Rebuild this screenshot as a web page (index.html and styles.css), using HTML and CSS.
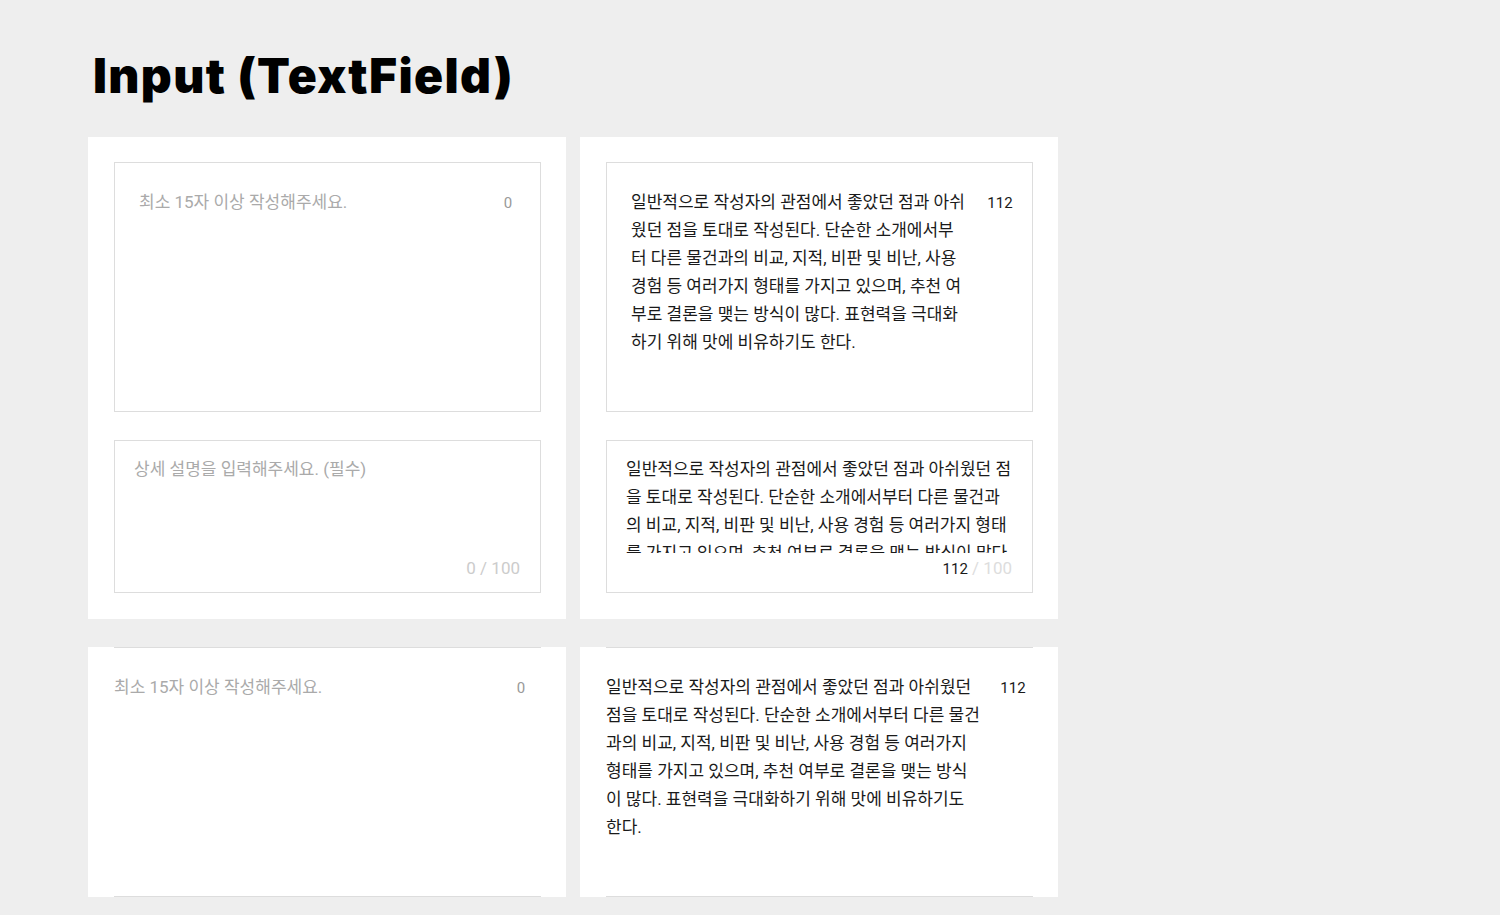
FILE: index.html
```html
<!DOCTYPE html>
<html lang="ko">
<head>
<meta charset="utf-8">
<title>Input (TextField)</title>
<link rel="stylesheet" href="styles.css">
</head>
<body>
<main class="page">
  <h1 class="title">Input (TextField)</h1>
  <div class="grid">
    <section class="card">
      <div class="field field--box field--tall">
        <div class="field__text placeholder">최소 15자 이상 작성해주세요.</div>
        <div class="field__count">0</div>
      </div>
      <div class="field field--box field--short">
        <div class="field__area">
          <div class="field__text placeholder">상세 설명을 입력해주세요. (필수)</div>
        </div>
        <div class="field__footer">0 / 100</div>
      </div>
    </section>

    <section class="card">
      <div class="field field--box field--tall">
        <div class="field__text">일반적으로 작성자의 관점에서 좋았던 점과 아쉬<br>웠던 점을 토대로 작성된다. 단순한 소개에서부<br>터 다른 물건과의 비교, 지적, 비판 및 비난, 사용<br>경험 등 여러가지 형태를 가지고 있으며, 추천 여<br>부로 결론을 맺는 방식이 많다. 표현력을 극대화<br>하기 위해 맛에 비유하기도 한다.</div>
        <div class="field__count field__count--filled">112</div>
      </div>
      <div class="field field--box field--short">
        <div class="field__area">
          <div class="field__text">일반적으로 작성자의 관점에서 좋았던 점과 아쉬웠던 점<br>을 토대로 작성된다. 단순한 소개에서부터 다른 물건과<br>의 비교, 지적, 비판 및 비난, 사용 경험 등 여러가지 형태<br>를 가지고 있으며, 추천 여부로 결론을 맺는 방식이 많다.<br>표현력을 극대화하기 위해 맛에 비유하기도 한다.</div>
        </div>
        <div class="field__footer"><span class="field__current">112</span> <span class="field__max">/ 100</span></div>
      </div>
    </section>

    <section class="card card--line">
      <div class="field field--line">
        <div class="field__text placeholder">최소 15자 이상 작성해주세요.</div>
        <div class="field__count">0</div>
      </div>
    </section>

    <section class="card card--line">
      <div class="field field--line">
        <div class="field__text">일반적으로 작성자의 관점에서 좋았던 점과 아쉬웠던<br>점을 토대로 작성된다. 단순한 소개에서부터 다른 물건<br>과의 비교, 지적, 비판 및 비난, 사용 경험 등 여러가지<br>형태를 가지고 있으며, 추천 여부로 결론을 맺는 방식<br>이 많다. 표현력을 극대화하기 위해 맛에 비유하기도<br>한다.</div>
        <div class="field__count field__count--filled">112</div>
      </div>
    </section>
  </div>
</main>
</body>
</html>
```

FILE: styles.css
```css
* {
  box-sizing: border-box;
}

html,
body {
  margin: 0;
  background: #eeeeee;
}

body {
  font-family: Roboto, "Noto Sans CJK KR", sans-serif;
  color: #1a1a1a;
}

.page {
  height: 915px;
  overflow: hidden;
  padding: 47px 0 0 88px;
}

.title {
  margin: 0 0 32px 5px;
  font-family: Inter, sans-serif;
  font-weight: 900;
  font-size: 48px;
  line-height: 58px;
  letter-spacing: 1.35px;
  color: #000000;
}

.grid {
  display: grid;
  grid-template-columns: 478px 478px;
  column-gap: 14px;
  row-gap: 28px;
}

.card {
  background: #ffffff;
  padding: 25px 25px 26px 26px;
  display: flex;
  flex-direction: column;
  gap: 28px;
}

.card--line {
  padding: 0 25px 0 26px;
  height: 250px;
}

.field--box {
  border: 1px solid #dddddd;
  background: #ffffff;
}

.field--tall {
  height: 250px;
  display: flex;
  align-items: flex-start;
  padding: 25px 12px 0 24px;
}

.field__text {
  flex: 1;
  font-size: 17px;
  line-height: 28px;
  white-space: nowrap;
  color: #1a1a1a;
}

.placeholder {
  color: #aaaaaa;
}

.field__count {
  width: 40px;
  flex: none;
  text-align: center;
  font-size: 15px;
  line-height: 28px;
  color: #999999;
  margin-top: 1px;
}

.field__count--filled {
  color: #1a1a1a;
}

.field--short {
  height: 153px;
  padding: 14px 20px 10px 19px;
}

.field__area {
  height: 98px;
  overflow: hidden;
}

.field__footer {
  margin-top: 1px;
  text-align: right;
  font-size: 17px;
  line-height: 28px;
  color: #cccccc;
}

.field__current {
  color: #1a1a1a;
  font-size: 15px;
}

.field__max {
  color: #dddddd;
}

.field--line {
  height: 250px;
  display: flex;
  align-items: flex-start;
  padding-top: 25px;
  border-top: 1px solid #dddddd;
  border-bottom: 1px solid #dddddd;
}
```
